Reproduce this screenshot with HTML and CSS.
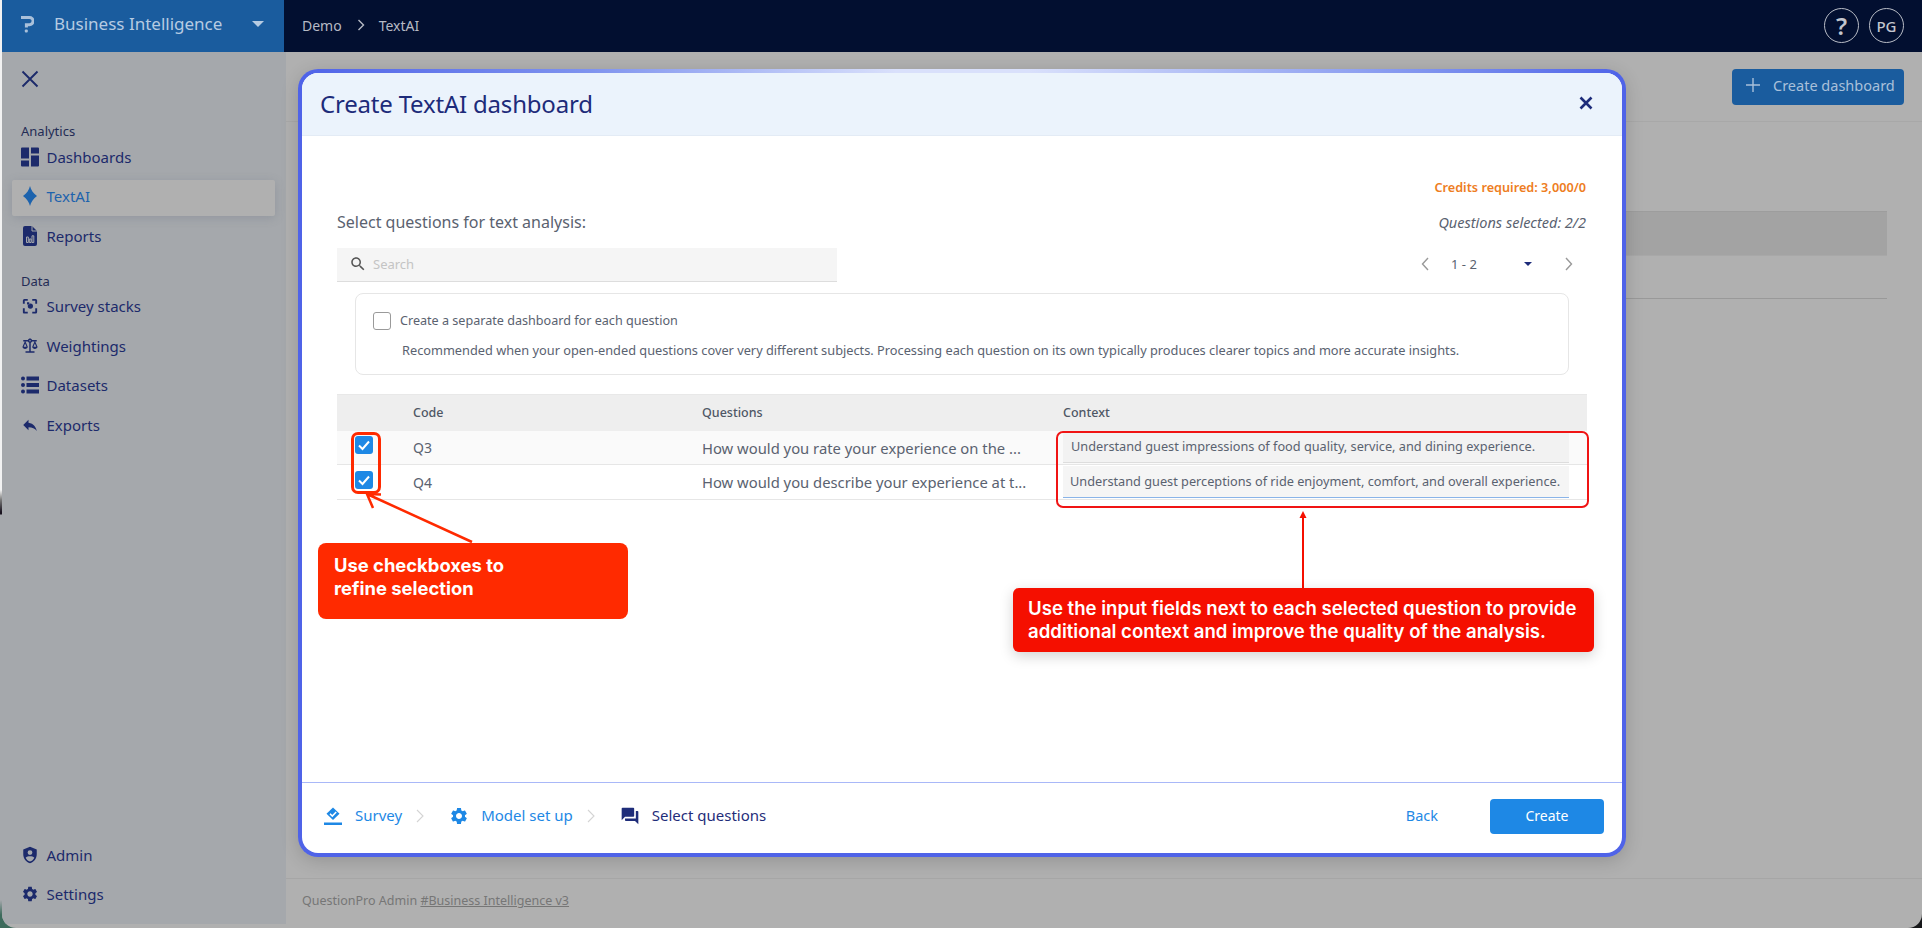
FILE: index.html
```html
<!DOCTYPE html>
<html lang="en">
<head>
<meta charset="utf-8">
<title>Create TextAI dashboard</title>
<link rel="stylesheet" href="styles.css">
</head>
<body>
<div class="strip"></div>
<div class="app">
  <header class="topbar">
    <div class="brand">
      <svg class="logo" viewBox="0 0 13 18"><path d="M0 2.500H8.500a3.500 3.500 0 0 1 0 7.200H5.400V12.500" fill="none" stroke="currentColor" stroke-width="3"/><rect x="3.800" y="14.400" width="3" height="3" rx="1" fill="currentColor"/></svg>
      <span class="brand-name">Business Intelligence</span>
      <span class="brand-caret"></span>
    </div>
    <nav class="crumbs">
      <span>Demo</span>
      <svg class="crumb-sep" viewBox="0 0 8 12"><path d="M1.500 1l5 5-5 5" fill="none" stroke="currentColor" stroke-width="1.400"/></svg>
      <span>TextAI</span>
    </nav>
    <div class="top-actions">
      <span class="circle circle-q">?</span>
      <span class="circle">PG</span>
    </div>
  </header>
  <div class="below">
    <aside class="sidebar">
      <div class="side-close"><svg viewBox="0 0 18 18"><path d="M1.500 1.500l15 15M16.500 1.500l-15 15" stroke="currentColor" stroke-width="1.900" fill="none"/></svg></div>
      <div class="side-label side-label-first">Analytics</div>
      <a class="side-item"><svg viewBox="0 0 18 20"><path d="M0 1.500A1 1 0 0 1 1 .5h7v11H0zM0 13.500h8v6H1a1 1 0 0 1-1-1zM10 .5h7a1 1 0 0 1 1 1V6.500h-8zM10 8.500h8v10a1 1 0 0 1-1 1h-7z"/></svg><span>Dashboards</span></a>
      <a class="side-item side-item-active"><svg viewBox="0 0 18 20"><path d="M9 0C10 4 12 7 16 10 12 13 10 16 9 20 8 16 6 13 2 10 6 7 8 4 9 0Z"/></svg><span>TextAI</span></a>
      <a class="side-item"><svg viewBox="0 0 18 20"><path d="M4 0H11L16 5V18a2 2 0 0 1-2 2H4a2 2 0 0 1-2-2V2a2 2 0 0 1 2-2Z"/><path class="cut" d="M11 0V5H16M5.500 11h1.800v5.500H5.500zM8.300 13h1.800v3.500H8.300zM11 9.800h1.800v6.700H11z"/></svg><span>Reports</span></a>
      <div class="side-label">Data</div>
      <a class="side-item"><svg viewBox="0 0 24 24"><path d="M5 15H2.500v4.500A2 2 0 0 0 4.500 22H9v-2.500H5zM5 5h4V2.500H4.500a2 2 0 0 0-2 2V9H5zM19.500 2.500H15V5h4v4h2.500V4.500a2 2 0 0 0-2-2zM19 19.500h-4V22h4.500a2 2 0 0 0 2-2v-5H19zM12.500 8.500a3.500 3.500 0 1 0 0 7 3.500 3.500 0 0 0 0-7zM8 7h3v3H8z"/></svg><span>Survey stacks</span></a>
      <a class="side-item"><svg viewBox="0 0 24 24"><path d="M13 7.830c.85-.3 1.530-.98 1.830-1.830H18l-3 7c0 1.660 1.570 3 3.500 3s3.500-1.340 3.500-3l-3-7h2V4h-6.170c-.41-1.170-1.520-2-2.830-2s-2.420.83-2.830 2H3v2h2l-3 7c0 1.660 1.570 3 3.500 3S9 14.660 9 13L6 6h3.170c.3.85.98 1.530 1.830 1.830V19H6v2h12v-2h-5V7.830zM20.370 13h-3.740l1.870-4.360L20.370 13zm-13 0H3.630L5.500 8.640 7.370 13zM12 6c-.55 0-1-.45-1-1s.45-1 1-1 1 .45 1 1-.45 1-1 1z"/></svg><span>Weightings</span></a>
      <a class="side-item"><svg viewBox="0 0 18 18"><circle cx="2" cy="2.500" r="2"/><circle cx="2" cy="9" r="2"/><circle cx="2" cy="15.500" r="2"/><path d="M5.500.5H18v4H5.500zM5.500 7H18v4H5.500zM5.500 13.500H18v4H5.500z"/></svg><span>Datasets</span></a>
      <a class="side-item"><svg viewBox="0 0 24 24"><path d="M10 9V5l-7 7 7 7v-4.100c5 0 8.500 1.600 11 5.100-1-5-4-10-11-11z"/></svg><span>Exports</span></a>
      <div class="side-bottom">
        <a class="side-item"><svg viewBox="0 0 24 24"><path d="M12 1 3 4.800v6.200c0 5.600 3.800 10.800 9 12 5.200-1.200 9-6.400 9-12V4.800L12 1zm0 4.500a3.200 3.200 0 1 1 0 6.400 3.200 3.200 0 0 1 0-6.400zM12 20.800c-2.500-.8-4.600-2.700-5.800-5.300 1.400-1.400 3.500-2 5.800-2s4.400.6 5.800 2c-1.200 2.600-3.300 4.500-5.800 5.300z"/></svg><span>Admin</span></a>
        <a class="side-item"><svg viewBox="0 0 24 24"><path d="M19.140 12.940c.04-.3.06-.61.06-.94 0-.32-.02-.64-.07-.94l2.030-1.580c.18-.14.23-.41.12-.61l-1.920-3.320c-.12-.22-.37-.29-.59-.22l-2.390.96c-.5-.38-1.030-.7-1.620-.94l-.36-2.540c-.04-.24-.24-.41-.48-.41h-3.840c-.24 0-.43.17-.47.41l-.36 2.540c-.59.24-1.130.57-1.620.94l-2.390-.96c-.22-.08-.47 0-.59.22L2.740 8.870c-.12.21-.08.47.12.61l2.030 1.580c-.05.3-.09.63-.09.94s.02.64.07.94l-2.030 1.580c-.18.14-.23.41-.12.61l1.920 3.320c.12.22.37.29.59.22l2.390-.96c.5.38 1.030.7 1.620.94l.36 2.540c.05.24.24.41.48.41h3.840c.24 0 .44-.17.47-.41l.36-2.540c.59-.24 1.130-.56 1.620-.94l2.390.96c.22.08.47 0 .59-.22l1.920-3.320c.12-.22.07-.47-.12-.61l-2.010-1.580zM12 15.600c-1.980 0-3.600-1.620-3.600-3.600s1.620-3.600 3.600-3.600 3.600 1.620 3.600 3.600-1.620 3.600-3.600 3.600z"/></svg><span>Settings</span></a>
      </div>
    </aside>
    <main class="main">
      <div class="main-head"><button class="btn-dash"><svg viewBox="0 0 14 14"><path d="M7 0v14M0 7h14" stroke="currentColor" stroke-width="1.400" fill="none"/></svg><span>Create dashboard</span></button></div>
      <div class="main-body">
        <div class="bg-band"></div>
        <div class="bg-row"></div>
      </div>
      <footer class="main-foot">QuestionPro Admin&nbsp;<u>#Business Intelligence v3</u></footer>
    </main>
  </div>
</div>

<section class="modal">
  <div class="modal-head">
    <h1>Create TextAI dashboard</h1>
    <svg class="modal-x" viewBox="0 0 14 14"><path d="M1.500 1.500l11 11M12.500 1.500l-11 11" stroke="currentColor" stroke-width="2.600" fill="none"/></svg>
  </div>
  <div class="modal-body">
    <div class="credits">Credits required: 3,000/0</div>
    <div class="select-row">
      <span class="select-title">Select questions for text analysis:</span>
      <em class="selected-count">Questions selected: 2/2</em>
    </div>
    <div class="tools">
      <div class="search">
        <svg viewBox="0 0 24 24"><path d="M15.500 14h-.79l-.28-.27C15.410 12.590 16 11.110 16 9.500 16 5.910 13.090 3 9.500 3S3 5.910 3 9.500 5.910 16 9.500 16c1.610 0 3.090-.59 4.230-1.570l.27.28v.79l5 4.990L20.490 19l-4.990-5zm-6 0C7.010 14 5 11.990 5 9.500S7.010 5 9.500 5 14 7.010 14 9.500 11.990 14 9.500 14z"/></svg>
        <span>Search</span>
      </div>
      <div class="pager">
        <svg class="pg-chev" viewBox="0 0 8 14"><path d="M7 1L1.500 7 7 13" fill="none" stroke="currentColor" stroke-width="1.400"/></svg>
        <span class="pg-range">1 - 2</span>
        <span class="pg-caret"></span>
        <svg class="pg-chev" viewBox="0 0 8 14"><path d="M1 1l5.500 6L1 13" fill="none" stroke="currentColor" stroke-width="1.400"/></svg>
      </div>
    </div>
    <div class="option">
      <div class="option-top"><span class="box"></span><span class="option-label">Create a separate dashboard for each question</span></div>
      <p class="option-desc">Recommended when your open-ended questions cover very different subjects. Processing each question on its own typically produces clearer topics and more accurate insights.</p>
    </div>
    <div class="table">
      <div class="tr th"><span></span><span>Code</span><span>Questions</span><span>Context</span></div>
      <div class="tr td td-first">
        <span class="cell-check"><span class="check"><svg viewBox="0 0 18 18"><path d="M4 9.500l3.500 3.500L14 5.500" fill="none" stroke="#fff" stroke-width="2"/></svg></span></span>
        <span>Q3</span>
        <span class="q">How would you rate your experience on the ...</span>
        <span class="ctx"><span class="input">Understand guest impressions of food quality, service, and dining experience.</span></span>
      </div>
      <div class="tr td">
        <span class="cell-check"><span class="check"><svg viewBox="0 0 18 18"><path d="M4 9.500l3.500 3.500L14 5.500" fill="none" stroke="#fff" stroke-width="2"/></svg></span></span>
        <span>Q4</span>
        <span class="q">How would you describe your experience at t...</span>
        <span class="ctx"><span class="input input-focus">Understand guest perceptions of ride enjoyment, comfort, and overall experience.</span></span>
      </div>
    </div>
  </div>
  <div class="modal-foot">
    <div class="steps">
      <svg class="step-icon" viewBox="0 0 18 18"><path d="M9 .5l6.500 6.200L9 13 2.500 6.700z"/><path d="M6 6.800l2.300 2.300L12.200 5" fill="none" stroke="#fff" stroke-width="1.500"/><path d="M0 15.500h18V18H0z"/></svg>
      <span class="step-text">Survey</span>
      <svg class="step-chev" viewBox="0 0 8 14"><path d="M1 1l6 6-6 6" fill="none" stroke="currentColor" stroke-width="1.100"/></svg>
      <svg class="step-icon step-gear" viewBox="0 0 24 24"><path d="M19.140 12.940c.04-.3.06-.61.06-.94 0-.32-.02-.64-.07-.94l2.030-1.580c.18-.14.23-.41.12-.61l-1.920-3.320c-.12-.22-.37-.29-.59-.22l-2.390.96c-.5-.38-1.030-.7-1.620-.94l-.36-2.540c-.04-.24-.24-.41-.48-.41h-3.840c-.24 0-.43.17-.47.41l-.36 2.540c-.59.24-1.130.57-1.620.94l-2.390-.96c-.22-.08-.47 0-.59.22L2.740 8.870c-.12.21-.08.47.12.61l2.030 1.580c-.05.3-.09.63-.09.94s.02.64.07.94l-2.030 1.580c-.18.14-.23.41-.12.61l1.920 3.320c.12.22.37.29.59.22l2.390-.96c.5.38 1.030.7 1.620.94l.36 2.540c.05.24.24.41.48.41h3.840c.24 0 .44-.17.47-.41l.36-2.540c.59-.24 1.130-.56 1.620-.94l2.390.96c.22.08.47 0 .59-.22l1.920-3.320c.12-.22.07-.47-.12-.61l-2.010-1.580zM12 15.600c-1.980 0-3.600-1.620-3.600-3.600s1.620-3.600 3.600-3.600 3.600 1.620 3.600 3.600-1.620 3.600-3.600 3.600z"/></svg>
      <span class="step-text step-model">Model set up</span>
      <svg class="step-chev" viewBox="0 0 8 14"><path d="M1 1l6 6-6 6" fill="none" stroke="currentColor" stroke-width="1.100"/></svg>
      <svg class="step-icon step-forum" viewBox="0 0 24 24"><path d="M21 6h-2v9H6v2c0 .55.45 1 1 1h11l4 4V7c0-.55-.45-1-1-1zm-4 6V3c0-.55-.45-1-1-1H3c-.55 0-1 .45-1 1v14l4-4h10c.55 0 1-.45 1-1z"/></svg>
      <span class="step-text step-now">Select questions</span>
    </div>
    <div class="foot-actions">
      <span class="btn-back">Back</span>
      <button class="btn-create">Create</button>
    </div>
  </div>
</section>

<svg class="arrows" viewBox="0 0 1922 928">
  <path d="M472 542L367 494M381 494.500L367 494l6 14" fill="none" stroke="#ff2a00" stroke-width="2.500"/>
  <path d="M1303 588V516" stroke="#f50f00" stroke-width="2" fill="none"/>
  <path d="M1303 511l3.500 7h-7z" fill="#f50f00"/>
</svg>
<div class="mark mark-checks"></div>
<div class="mark mark-inputs"></div>
<div class="callout callout-a">Use checkboxes to<br>refine selection</div>
<div class="callout callout-b">Use the input fields next to each selected question to provide<br>additional context and improve the quality of the analysis.</div>
</body>
</html>
```
FILE: styles.css
```css
* { box-sizing: border-box; }
html, body { height: 100%; }
body {
  margin: 0;
  display: flex;
  width: 1922px;
  height: 928px;
  overflow: hidden;
  position: relative;
  background: linear-gradient(to right, #3d6b5c 0 50%, #17181a 50% 100%);
  font-family: "Noto Sans", "Open Sans", sans-serif;
}
.strip {
  width: 2px;
  flex: none;
  background: linear-gradient(to bottom, #f2f2f2 0 490px, #777 500px, #1a1420 512px, #1a1420 514px, #a5a8ac 515px, #a5a8ac 900px, #3d6b5c 915px);
}
.app {
  flex: 1;
  display: flex;
  flex-direction: column;
  background: #b0b0b0;
  border-radius: 0 0 14px 14px;
  overflow: hidden;
}
.topbar { height: 52px; flex: none; display: flex; align-items: center; background: #020f30; }
.brand { width: 282px; height: 52px; flex: none; display: flex; align-items: center; background: #1a5c9e; padding: 0 0 5px 19px; color: #a9c0da; }
.logo { width: 13px; height: 18px; flex: none; }
.brand-name { margin-left: 20px; font-size: 17px; color: #b6cbe2; white-space: nowrap; }
.brand-caret { margin-left: 30px; width: 0; height: 0; border: 6px solid transparent; border-bottom: 0; border-top: 6.500px solid #b6cbe2; }
.crumbs { display: flex; align-items: center; margin-left: 18px; padding-bottom: 2px; color: #b6bac4; font-size: 14px; }
.crumb-sep { width: 8px; height: 12px; margin: 0 14px 0 15px; }
.top-actions { margin-left: auto; display: flex; gap: 10px; margin-right: 18px; padding-bottom: 1px; }
.circle { width: 35px; height: 35px; border: 1px solid #b8bcc6; border-radius: 50%; color: #c3c6ce; display: flex; align-items: center; justify-content: center; font-size: 15px; font-weight: 500; }
.circle-q { font-size: 24px; font-weight: 600; }

.below { flex: 1; display: flex; min-height: 0; }
.sidebar { width: 284px; flex: none; margin-bottom: 4px; background: #a5a8ac; display: flex; flex-direction: column; padding: 0 10px; color: #1c2a6b; }
.side-close { height: 54px; flex: none; display: flex; align-items: center; padding-left: 9px; }
.side-close svg { width: 18px; height: 18px; }
.side-label { height: 14px; margin-top: 15px; margin-bottom: 2px; padding-left: 9px; font-size: 13px; line-height: 14px; color: #232c55; }
.side-label-first { margin-top: 18px; }
.side-item { height: 36px; flex: none; margin-bottom: 3.500px; display: flex; align-items: center; gap: 7.500px; padding: 0 0 3px 9px; font-size: 15px; color: #1c2a6b; width: 263px; border-radius: 2px; }
.side-item svg { width: 18px; height: 20px; flex: none; fill: currentColor; }
.side-item .cut { fill: none; stroke: #a5a8ac; stroke-width: 1; }
.side-item-active { background: #b0b0b0; color: #1d63ad; box-shadow: 0 2px 10px rgba(90, 100, 120, .25); }
.side-bottom { margin-top: auto; margin-bottom: 7px; }

.main { flex: 1; display: flex; flex-direction: column; min-width: 0; }
.main-head { height: 70px; flex: none; border-bottom: 1px solid #a8a8a8; padding: 17px 18px 0 0; display: flex; justify-content: flex-end; align-items: flex-start; }
.btn-dash { height: 36px; width: 172px; border: 0; border-radius: 4px; background: #1a5c9e; color: #a9c0da; display: flex; align-items: center; gap: 13px; padding: 0 0 4px 14px; font: inherit; font-size: 14.500px; white-space: nowrap; }
.btn-dash svg { width: 14px; height: 14px; flex: none; }
.main-body { flex: 1; padding: 89px 35px 0 16px; }
.bg-band { height: 45px; background: #a3a3a3; border-top: 1px solid #9d9d9d; border-bottom: 1px solid #a8a8a8; }
.bg-row { height: 43px; border-bottom: 1px solid #999; }
.main-foot { height: 50px; flex: none; border-top: 1px solid #a6a6a6; padding: 13px 0 0 16px; font-size: 12.500px; color: #767676; line-height: 17px; }

.modal {
  position: absolute; left: 298px; top: 69px; width: 1328px; height: 788px;
  border: 4px solid transparent; border-radius: 20px;
  background:
    linear-gradient(#fff, #fff) padding-box,
    linear-gradient(to right, #4f63e8 0, #7f93ee 22%, #d9e0fb 45%, #d9e0fb 55%, #7f93ee 85%, #4f63e8 100%) top / 100% 4px no-repeat border-box,
    linear-gradient(#4f63e8, #4f63e8) border-box;
  box-shadow: 0 4px 18px rgba(0, 0, 0, .16);
  display: flex; flex-direction: column; overflow: hidden;
}
.modal-head { height: 63px; flex: none; background: #ebf3fc; border-bottom: 1px solid #e3ebf5; display: flex; align-items: center; justify-content: space-between; padding: 0 29px 2px 18px; }
.modal-head h1 { margin: 0; font-size: 24px; font-weight: 400; color: #1d2b7a; letter-spacing: -.2px; }
.modal-x { width: 14px; height: 14px; color: #1d2b7a; }
.modal-body { flex: 1; padding: 42px 35px 0 35px; color: #5a6270; }
.credits { height: 18px; line-height: 18px; padding-right: 1px; text-align: right; font-size: 12.700px; font-weight: 600; color: #ee7d22; }
.select-row { height: 20px; margin-top: 16px; padding-right: 1px; display: flex; justify-content: space-between; align-items: center; }
.select-title { font-size: 16px; }
.selected-count { font-size: 14.500px; }
.tools { height: 34px; margin-top: 16px; display: flex; justify-content: space-between; }
.search { width: 500px; background: #f5f5f5; border-bottom: 1px solid #ddd; display: flex; align-items: center; padding: 0 0 1px 12px; gap: 6px; }
.search svg { width: 18px; height: 18px; fill: #555; }
.search span { font-size: 13px; color: #c4c4c4; }
.pager { width: 162px; margin-right: 4px; padding-bottom: 2px; display: flex; align-items: center; color: #5a6270; }
.pg-chev { width: 8px; height: 14px; color: #999; flex: none; }
.pg-range { font-size: 13px; margin-left: 22px; width: 66px; }
.pg-caret { width: 0; height: 0; border: 4px solid transparent; border-bottom: 0; border-top: 4.500px solid #1d2b7a; margin-right: 33px; margin-left: 7px; }
.option { height: 82px; margin: 11px 18px 0; border: 1px solid #e6e6e6; border-radius: 8px; padding: 18px 0 0 17px; }
.option-top { display: flex; align-items: center; gap: 9px; height: 18px; }
.box { width: 18px; height: 18px; border: 1px solid #9a9a9a; border-radius: 3px; flex: none; }
.option-label { font-size: 12.600px; padding-bottom: 2px; }
.option-desc { margin: 11px 0 0 29px; font-size: 12.780px; line-height: 18px; white-space: nowrap; }
.table { margin-top: 19px; }
.tr { display: grid; grid-template-columns: 76px 289px 361px 1fr; align-items: center; font-size: 14px; }
.th { height: 37px; padding-bottom: 2px; background: #eee; font-size: 12.500px; font-weight: 500; color: #4f5765; border-top: 1px solid #e8e8e8; }
.td { height: 35px; border-bottom: 1px solid #e6e6e6; }
.td-first { height: 34px; background: #fafafa; }
.cell-check { padding-left: 18px; height: 100%; }
.check { display: block; width: 18px; height: 18px; background: #1e88e5; border-radius: 3px; margin-top: 5px; }
.td:not(.td-first) .check { margin-top: 6px; }
.check svg { display: block; }
.q { white-space: nowrap; font-size: 14.800px; }
.ctx { padding-right: 18px; height: 100%; display: flex; align-items: center; }
.input { width: 100%; height: 31px; background: #f2f2f2; border-bottom: 1px solid #ddd; font-size: 12.720px; line-height: 28px; padding-left: 8px; white-space: nowrap; color: #5a6270; }
.input-focus { height: 32px; line-height: 30px; background: #f5f5f5; border-bottom-color: #8ab4e8; padding-left: 7px; }
.modal-foot { height: 71px; flex: none; border-top: 1px solid #a9b8f8; display: flex; align-items: center; justify-content: space-between; padding: 0 18px 4px 22px; }
.steps { display: flex; align-items: center; padding-bottom: 1px; color: #1e88e5; font-size: 15px; }
.step-icon { width: 18px; height: 18px; fill: currentColor; flex: none; }
.step-text { margin-left: 13px; margin-bottom: 2px; }
.step-chev { width: 8px; height: 14px; color: #d4d4d4; margin-left: 14px; flex: none; }
.step-gear { margin-left: 25px; width: 20px; height: 20px; }
.step-model { margin-left: 12px; }
.step-forum { margin-left: 25px; color: #1f2d7a; width: 20px; height: 20px; }
.step-now { color: #1f2d7a; margin-left: 12px; }
.foot-actions { display: flex; align-items: center; gap: 52px; }
.btn-back { font-size: 14.500px; color: #1e88e5; margin-bottom: 2px; }
.btn-create { width: 114px; height: 35px; border: 0; border-radius: 4px; background: #1e88e5; color: #fff; font: inherit; font-size: 14px; padding-bottom: 2px; }

.arrows { position: absolute; left: 0; top: 0; width: 1922px; height: 928px; pointer-events: none; }
.mark { position: absolute; pointer-events: none; }
.mark-checks { left: 351px; top: 432px; width: 30px; height: 62px; border: 3px solid #ff2a00; border-radius: 7px; }
.mark-inputs { left: 1056px; top: 431px; width: 533px; height: 77px; border: 2px solid #f01414; border-radius: 7px; }
.callout { position: absolute; color: #fff; font-family: Inter, "Liberation Sans", sans-serif; font-weight: 600; font-size: 18.600px; line-height: 23px; }
.callout-a { left: 318px; top: 543px; width: 310px; height: 76px; background: #ff2a00; border-radius: 8px; padding: 11px 0 0 16px; font-weight: 700; font-size: 18.400px; }
.callout-b { left: 1013px; top: 588px; width: 581px; height: 64px; background: #f50f00; border-radius: 6px; padding: 9px 0 0 15px; box-shadow: 0 4px 14px rgba(0, 0, 0, .18); }
```
